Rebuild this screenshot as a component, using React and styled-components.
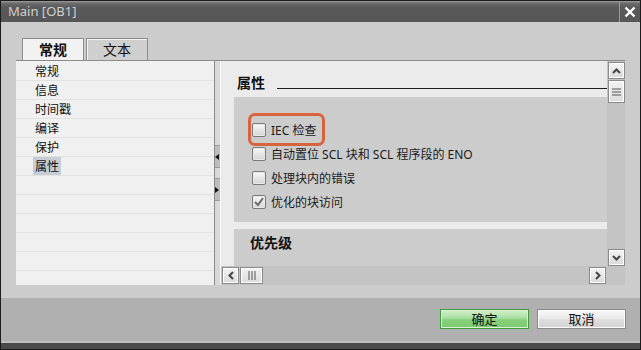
import React from 'react'
import styled, { createGlobalStyle } from 'styled-components'

const GlobalStyle = createGlobalStyle`
  html, body { margin: 0; padding: 0; background: #cccccc; }
  body { font-family: "Noto Sans", "Noto Sans CJK SC", sans-serif; }
  * { box-sizing: border-box; }
`

const navItems = ['常规', '信息', '时间戳', '编译', '保护', '属性', '', '', '', '', '', '']

const options = [
    { label: 'IEC 检查', checked: false, highlight: true },
    { label: '自动置位 SCL 块和 SCL 程序段的 ENO', checked: false },
    { label: '处理块内的错误', checked: false },
    { label: '优化的块访问', checked: true },
]

export default function App() {
    return (
        <>
            <GlobalStyle />
            <Window>
                <TitleBar>
                    <Title>Main [OB1]</Title>
                    <CloseButton>
                        <svg width="12" height="12" viewBox="0 0 12 12">
                            <path d="M1.5 1.5 L10.5 10.5 M10.5 1.5 L1.5 10.5" stroke="#fff" strokeWidth="2.4" />
                        </svg>
                    </CloseButton>
                </TitleBar>

                <Body>
                    <Tabs>
                        <Tab $active>常规</Tab>
                        <Tab>文本</Tab>
                    </Tabs>
                    <Frame>
                        <NavList>
                            {navItems.map((item, i) => (
                                <NavRow key={i}>
                                    {item && <NavLabel $selected={item === '属性'}>{item}</NavLabel>}
                                </NavRow>
                            ))}
                        </NavList>

                        <Splitter>
                            <SplitButton>
                                <svg width="4" height="6" viewBox="0 0 4 6"><path d="M4 0 L0 3 L4 6 Z" fill="#111" /></svg>
                            </SplitButton>
                            <SplitButton>
                                <svg width="4" height="6" viewBox="0 0 4 6"><path d="M0 0 L4 3 L0 6 Z" fill="#111" /></svg>
                            </SplitButton>
                        </Splitter>

                        <RightPane>
                            <ScrollArea>
                                <Content>
                                    <SectionHeading>
                                        <HeadingText>属性</HeadingText>
                                        <Rule />
                                    </SectionHeading>
                                    <Group>
                                        {options.map((opt) => (
                                            <OptionRow key={opt.label} $highlight={opt.highlight}>
                                                <Checkbox>
                                                    {opt.checked && (
                                                        <svg width="12" height="12" viewBox="0 0 12 12">
                                                            <path d="M2 6 L5 9 L10 2" stroke="#6a6a6a" strokeWidth="2" fill="none" />
                                                        </svg>
                                                    )}
                                                </Checkbox>
                                                <OptionLabel>{opt.label}</OptionLabel>
                                            </OptionRow>
                                        ))}
                                    </Group>
                                    <Group $tight>
                                        <GroupTitle>优先级</GroupTitle>
                                    </Group>
                                </Content>
                                <VScroll>
                                    <ScrollButton>
                                        <svg width="9" height="6" viewBox="0 0 9 6"><path d="M1 5 L4.5 1.5 L8 5" stroke="#444" strokeWidth="2" fill="none" /></svg>
                                    </ScrollButton>
                                    <ScrollThumb $vertical>
                                        <svg width="9" height="8" viewBox="0 0 9 8"><path d="M0 1 H9 M0 4 H9 M0 7 H9" stroke="#555" strokeWidth="1" /></svg>
                                    </ScrollThumb>
                                    <ScrollButton $end>
                                        <svg width="9" height="6" viewBox="0 0 9 6"><path d="M1 1 L4.5 4.5 L8 1" stroke="#444" strokeWidth="2" fill="none" /></svg>
                                    </ScrollButton>
                                </VScroll>
                            </ScrollArea>
                            <HScrollRow>
                                <HScroll>
                                    <ScrollButton>
                                        <svg width="6" height="9" viewBox="0 0 6 9"><path d="M5 1 L1.5 4.5 L5 8" stroke="#444" strokeWidth="2" fill="none" /></svg>
                                    </ScrollButton>
                                    <ScrollThumb>
                                        <svg width="8" height="9" viewBox="0 0 8 9"><path d="M1 0 V9 M4 0 V9 M7 0 V9" stroke="#555" strokeWidth="1" /></svg>
                                    </ScrollThumb>
                                    <ScrollButton $end>
                                        <svg width="6" height="9" viewBox="0 0 6 9"><path d="M1 1 L4.5 4.5 L1 8" stroke="#444" strokeWidth="2" fill="none" /></svg>
                                    </ScrollButton>
                                </HScroll>
                                <Corner />
                            </HScrollRow>
                        </RightPane>
                    </Frame>
                </Body>

                <Footer>
                    <DialogButton $primary>确定</DialogButton>
                    <DialogButton>取消</DialogButton>
                </Footer>
                <BottomBar />
            </Window>
        </>
    )
}

const Window = styled.div`
    width: 641px;
    height: 350px;
    border: 1px solid #1c1c1c;
    display: flex;
    flex-direction: column;
    background: #cccccc;
`

const TitleBar = styled.div`
    height: 21px;
    display: flex;
    align-items: center;
    background: linear-gradient(#a0a0a0 0, #6e6e6e 2px, #5a5a5a 6px, #565656 100%);
`

const Title = styled.div`
    flex: 1;
    padding-left: 7px;
    color: #cfcfcf;
    font-family: "Noto Sans", sans-serif;
    font-size: 13px;
    line-height: 21px;
`

const CloseButton = styled.div`
    width: 21px;
    height: 21px;
    border-left: 1px solid #9a9a9a;
    display: flex;
    align-items: center;
    justify-content: center;
`

const Body = styled.div`
    height: 276px;
    padding: 16px 15px 13px 15px;
    display: flex;
    flex-direction: column;
`

const Tabs = styled.div`
    height: 22px;
    padding-left: 6px;
    display: flex;
    gap: 2px;
`

const Tab = styled.div`
    width: 62px;
    height: 22px;
    border: 1px solid #8c8c8c;
    border-bottom: none;
    background: ${p => (p.$active ? '#f2f2f2' : '#cfcfcf')};
    box-shadow: inset 1px 1px 0 #f4f4f4;
    color: #111;
    font-family: "Noto Sans CJK SC", sans-serif;
    font-size: 14px;
    font-weight: ${p => (p.$active ? 700 : 400)};
    line-height: 21px;
    text-align: center;
`

const Frame = styled.div`
    height: 225px;
    border-top: 1px solid #8c8c8c;
    display: flex;
`

const NavList = styled.div`
    width: 198px;
    background: #f0f0f0;
    padding-top: 1px;
    overflow: hidden;
`

const NavRow = styled.div`
    height: 19px;
    border-bottom: 1px solid #e2e2e2;
    padding-left: 17px;
    display: flex;
    align-items: stretch;
`

const NavLabel = styled.span`
    padding: 0 2px;
    background: ${p => (p.$selected ? '#c6cdd7' : 'transparent')};
    color: #111;
    font-family: "Noto Sans CJK SC", sans-serif;
    font-size: 12px;
    line-height: 18px;
`

const Splitter = styled.div`
    width: 7px;
    border-left: 1px solid #8a8a8a;
    border-right: 1px solid #fafafa;
    background: #d8d8d8;
    padding-top: 84px;
    display: flex;
    flex-direction: column;
    gap: 10px;
`

const SplitButton = styled.div`
    height: 23px;
    background: #bdbdbd;
    border-top: 1px solid #9a9a9a;
    border-bottom: 1px solid #9a9a9a;
    display: flex;
    align-items: center;
    justify-content: flex-start;
`

const RightPane = styled.div`
    flex: 1;
    display: flex;
    flex-direction: column;
    background: #ebebeb;
`

const ScrollArea = styled.div`
    flex: 1;
    display: flex;
    min-height: 0;
`

const Content = styled.div`
    flex: 1;
    overflow: hidden;
    display: flex;
    flex-direction: column;
`

const SectionHeading = styled.div`
    height: 36px;
    padding: 11px 0 0 16px;
    display: flex;
    align-items: flex-start;
    gap: 12px;
`

const HeadingText = styled.div`
    font-family: "Noto Sans CJK SC", sans-serif;
    font-size: 14px;
    font-weight: 700;
    line-height: 20px;
    color: #111;
`

const Rule = styled.div`
    flex: 1;
    height: 1px;
    margin-top: 16px;
    background: #1e1e1e;
`

const Group = styled.div`
    margin-left: 13px;
    background: #cccccc;
    flex-shrink: 0;
    height: ${p => (p.$tight ? 'auto' : '125px')};
    flex-grow: ${p => (p.$tight ? 1 : 0)};
    margin-bottom: ${p => (p.$tight ? 0 : '7px')};
    padding: ${p => (p.$tight ? '3px 0 0 16px' : '21px 0 0 18px')};
`

const GroupTitle = styled.div`
    font-family: "Noto Sans CJK SC", sans-serif;
    font-size: 14px;
    font-weight: 700;
    line-height: 20px;
    color: #111;
`

const OptionRow = styled.div`
    position: relative;
    height: 24px;
    display: flex;
    align-items: center;
    gap: 5px;

    &::after {
        content: '';
        display: ${p => (p.$highlight ? 'block' : 'none')};
        position: absolute;
        left: -4px;
        top: -5px;
        width: 71px;
        height: 27px;
        border: 3px solid #d8643e;
        border-radius: 7px;
    }
`

const Checkbox = styled.span`
    width: 14px;
    height: 14px;
    border: 1px solid #7a7a7a;
    border-radius: 2px;
    background: linear-gradient(#f8f8f8, #d6d6d6);
    box-shadow: inset 0 0 0 1px #e8e8e8;
    display: flex;
    align-items: center;
    justify-content: center;
`

const OptionLabel = styled.span`
    font-family: "Noto Sans", "Noto Sans CJK SC", sans-serif;
    font-size: 12px;
    color: #1a1a1a;
    white-space: nowrap;
`

const VScroll = styled.div`
    width: 18px;
    background: #c4c4c4;
    padding: 1px 0 0 1px;
    display: flex;
    flex-direction: column;
    gap: 1px;
`

const ScrollButton = styled.div`
    width: 17px;
    height: 17px;
    flex-shrink: 0;
    border: 1px solid #8a8a8a;
    box-shadow: inset 0 0 0 1px #ffffff;
    background: linear-gradient(#f4f4f4, #dadada);
    display: flex;
    align-items: center;
    justify-content: center;
    margin-top: ${p => (p.$end ? 'auto' : 0)};
    margin-left: ${p => (p.$end ? 'auto' : 0)};
`

const ScrollThumb = styled.div`
    width: ${p => (p.$vertical ? '17px' : '23px')};
    height: ${p => (p.$vertical ? '23px' : '17px')};
    flex-shrink: 0;
    border: 1px solid #8a8a8a;
    box-shadow: inset 0 0 0 1px #ffffff;
    background: linear-gradient(#f2f2f2, #dcdcdc);
    display: flex;
    align-items: center;
    justify-content: center;
`

const HScrollRow = styled.div`
    height: 19px;
    display: flex;
`

const HScroll = styled.div`
    flex: 1;
    background: #c4c4c4;
    padding: 1px 1px 1px 1px;
    display: flex;
    gap: 1px;
`

const Corner = styled.div`
    width: 18px;
    background: #c4c4c4;
`

const Footer = styled.div`
    height: 43px;
    background: #b0b0b0;
    padding: 11px 14px 0 0;
    display: flex;
    justify-content: flex-end;
    align-items: flex-start;
    gap: 8px;
`

const DialogButton = styled.div`
    width: 89px;
    height: 20px;
    border: 1px solid ${p => (p.$primary ? '#3f9c3a' : '#8a8a8a')};
    box-shadow: inset 0 0 0 1px ${p => (p.$primary ? '#d8f2d2' : '#fbfbfb')};
    background: ${p =>
        p.$primary
            ? 'linear-gradient(#d4f0cd 0%, #a9df9f 45%, #86d07b 55%, #7cc971 100%)'
            : 'linear-gradient(#f8f8f8 0%, #ebebeb 45%, #dddddd 55%, #d4d4d4 100%)'};
    color: #111;
    font-family: "Noto Sans CJK SC", sans-serif;
    font-size: 13px;
    line-height: 18px;
    text-align: center;
`

const BottomBar = styled.div`
    height: 8px;
    background: linear-gradient(#c0c0c0 0, #c0c0c0 2px, #4a4a4a 2px);
`
